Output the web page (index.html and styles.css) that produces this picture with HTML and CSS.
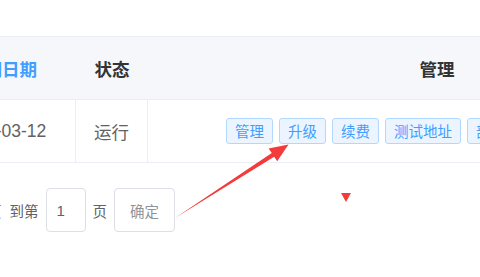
FILE: index.html
```html
<!DOCTYPE html>
<html lang="zh-CN">
<head>
    <meta charset="UTF-8">
    <meta name="viewport" content="width=device-width, initial-scale=1.0">
    <title>订单列表</title>
    <link rel="stylesheet" href="styles.css">
</head>
<body>
    <div class="page">
        <div class="scroller">
            <div class="table">
                <div class="th sorted">到期日期</div>
                <div class="th">状态</div>
                <div class="th">管理</div>

                <div class="td">2021-03-12</div>
                <div class="td">运行</div>
                <div class="td td-actions">
                    <div class="actions">
                        <button class="mini-btn">管理</button>
                        <button class="mini-btn">升级</button>
                        <button class="mini-btn">续费</button>
                        <button class="mini-btn">测试地址</button>
                        <button class="mini-btn">部署</button>
                        <button class="mini-btn">备份</button>
                        <button class="mini-btn">删除</button>
                    </div>
                </div>
            </div>

            <div class="pager">
                <span class="pager-total">共 1 页</span>
                <span class="pager-text">到第</span>
                <input class="pager-input" type="text" value="1">
                <span class="pager-text">页</span>
                <button class="pager-btn">确定</button>
            </div>
        </div>

        <!-- annotation overlay -->
        <svg class="overlay" width="480" height="277" viewBox="0 0 480 277">
            <polygon fill="#f33b3b" points="175,218 271.8,153.1 268.6,148.6 288.5,144.5 277.2,161.2 274.2,156.7"/>
            <polygon fill="#f33b3b" points="341,193 351,193 346,202"/>
        </svg>
    </div>
</body>
</html>
```

FILE: styles.css
```css
html, body {
    margin: 0;
    padding: 0;
    background: #fff;
}

body {
    font-family: "Liberation Sans", "Noto Sans CJK SC", sans-serif;
    color: #606266;
    overflow: hidden;
}

.page {
    position: relative;
    width: 480px;
    height: 277px;
    overflow: hidden;
}

.scroller {
    margin-left: -72px;
    padding-top: 36px;
    width: 798px;
}

.table {
    display: grid;
    grid-template-columns: 148px 72px 578px;
    border-top: 1px solid #ebeef5;
}

.th {
    height: 62px;
    background: #f5f7fa;
    border-bottom: 1px solid #ebeef5;
    display: flex;
    align-items: center;
    justify-content: center;
    font-size: 17.5px;
    font-weight: bold;
    color: #333;
}

.th.sorted {
    color: #409eff;
}

.td {
    height: 62px;
    border-bottom: 1px solid #ebeef5;
    border-right: 1px solid #ebeef5;
    display: flex;
    align-items: center;
    justify-content: center;
    font-size: 17.5px;
    color: #606266;
}

.td-actions {
    border-right: none;
}

.actions {
    display: flex;
    gap: 6px;
    margin-right: 28px;
}

.mini-btn {
    height: 26px;
    padding: 0 8px;
    border: 1px solid #b3d8ff;
    border-radius: 3px;
    background: #ecf5ff;
    color: #409eff;
    font-family: "Noto Sans CJK SC", sans-serif;
    font-size: 14.5px;
    line-height: 24px;
    cursor: pointer;
}

.pager {
    display: flex;
    align-items: center;
    margin-top: 25px;
    margin-left: 30px;
    font-size: 14.5px;
    font-family: "Noto Sans CJK SC", sans-serif;
}

.pager-total {
    margin-right: 8px;
}

.pager-text {
    color: #606266;
}

.pager-input {
    box-sizing: border-box;
    width: 40px;
    height: 44px;
    margin: 0 7px;
    padding: 0 0 0 10px;
    border: 1px solid #dcdfe6;
    border-radius: 4px;
    font-family: "Liberation Sans", sans-serif;
    font-size: 15px;
    color: #606266;
    outline: none;
}

.pager-btn {
    box-sizing: border-box;
    width: 61px;
    height: 44px;
    margin-left: 7px;
    border: 1px solid #dcdfe6;
    border-radius: 4px;
    background: #fff;
    color: #909399;
    font-family: "Noto Sans CJK SC", sans-serif;
    font-size: 14.5px;
}

.overlay {
    position: absolute;
    left: 0;
    top: 0;
    pointer-events: none;
}
```
